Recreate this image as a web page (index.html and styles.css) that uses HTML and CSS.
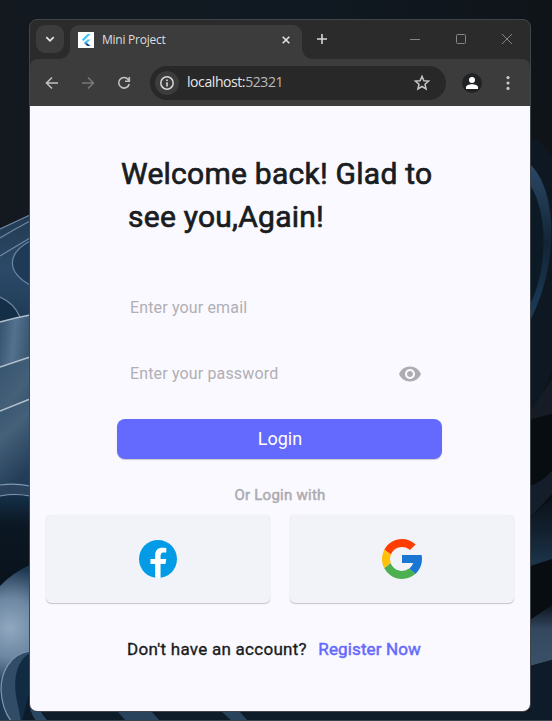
FILE: index.html
```html
<!DOCTYPE html>
<html lang="en">
<head>
<meta charset="utf-8">
<title>Mini Project</title>
<link rel="stylesheet" href="styles.css">
</head>
<body>
<svg class="wallpaper" viewBox="0 0 552 721" aria-hidden="true">
  <defs>
    <linearGradient id="night" x2="1" y2="0"><stop stop-color="#141920"/><stop offset=".5" stop-color="#101922"/><stop offset="1" stop-color="#0f1419"/></linearGradient>
    <linearGradient id="petalA" x2="0" y2="1"><stop stop-color="#233a52"/><stop offset=".5" stop-color="#2c4a68"/><stop offset="1" stop-color="#1d3954"/></linearGradient>
    <linearGradient id="petalB" x2="1" y2=".6"><stop stop-color="#33516e"/><stop offset=".4" stop-color="#54718d"/><stop offset="1" stop-color="#2c4862"/></linearGradient>
    <linearGradient id="petalC" x2=".3" y2="1"><stop stop-color="#35536e"/><stop offset=".4" stop-color="#456079"/><stop offset="1" stop-color="#233d58"/></linearGradient>
    <linearGradient id="hollow" x2="0" y2="1"><stop stop-color="#15314a"/><stop offset=".3" stop-color="#0b1722"/><stop offset="1" stop-color="#09121b"/></linearGradient>
    <radialGradient id="glow" gradientUnits="userSpaceOnUse" cx="10" cy="628" r="60"><stop stop-color="#91a8c0"/><stop offset=".5" stop-color="#6c86a1"/><stop offset="1" stop-color="#1e3852"/></radialGradient>
    <linearGradient id="blade" x2="0" y2="1"><stop stop-color="#2b4866"/><stop offset=".5" stop-color="#122536"/><stop offset="1" stop-color="#1c3c5a"/></linearGradient>
    <linearGradient id="band" x2="0" y2="1"><stop stop-color="#0b1119"/><stop offset=".5" stop-color="#12212f"/><stop offset="1" stop-color="#1c354c"/></linearGradient>
    <linearGradient id="lit" x2="0" y2="1"><stop stop-color="#0b151f"/><stop offset=".4" stop-color="#33485f"/><stop offset="1" stop-color="#3a5169"/></linearGradient>
  </defs>
  <rect width="552" height="721" fill="url(#night)"/>
  <path d="M0 229Q15 222 30 215V325H0Z" fill="url(#petalA)"/>
  <path d="M30 240C7 253 6 272 30 285Z" fill="#1e3a56"/>
  <path d="M0 297Q14 303 20 317L0 322Z" fill="#142e47"/>
  <path d="M0 321Q14 318 30 315V490H0Z" fill="url(#petalB)"/>
  <path d="M0 367Q15 362 30 357V490H0Z" fill="url(#petalC)"/>
  <path d="M0 411Q15 405 30 399V490H0Z" fill="url(#petalC)"/>
  <path d="M0 485Q15 483 30 486V496H0Z" fill="#2b435d"/>
  <path d="M0 496Q15 493 30 496V596H0Z" fill="url(#hollow)"/>
  <path d="M0 586Q12 573 30 565V721H0Z" fill="url(#glow)"/>
  <path d="M30 651C10 654 1 672 1 690Q2 709 11 721H34V651Z" fill="#314c67"/>
  <path d="M30 653C18 660 13 676 16 696L21 721H44V653Z" fill="#102b42"/>
  <path d="M30 690V712H530V721H22Z" fill="#0e1b28"/>
  <path d="M30 700Q29 712 36 721H48Q40 713 39 706Z" fill="#294761"/>
  <path d="M118 712H152L160 721H126ZM222 712H240L248 721H232Z" fill="#29435c"/>
  <g fill="none" stroke="#8298b0" stroke-width="1.2">
    <path d="M0 229Q15 222 30 215M0 238Q15 229 30 221M0 256Q15 247 30 238M30 241C6 254 7 272 30 285M0 297Q14 303 20 317" stroke="#6d88a4"/>
    <path d="M0 322Q14 318 30 315M0 367Q15 362 30 357M0 411Q15 405 30 399" stroke="#b0bfce" stroke-width="1.6"/>
    <path d="M0 485Q15 483 30 486M0 496Q15 493 30 496M30 651C10 654 1 672 1 690Q2 709 11 721"/>
  </g>
  <path d="M530 136Q544 144 552 157V370Q542 398 530 418Z" fill="#0d1822"/>
  <path d="M530 164C557 190 560 262 530 321Z" fill="url(#blade)"/>
  <path d="M530 185C548 212 548 270 530 304Z" fill="#0c1a26"/>
  <path d="M530 412L552 379V414L530 419Z" fill="#151c26"/>
  <path d="M530 420L552 414V721H530Z" fill="#080d12"/>
  <path d="M530 486Q542 482 552 471V494L530 518Z" fill="#131e2a"/>
  <path d="M530 518L552 497V559L530 566Z" fill="url(#band)"/>
  <path d="M530 620L552 605V660L530 666Z" fill="url(#lit)"/>
  <path d="M530 666L552 660V721H530Z" fill="#0e1c29"/>
  <path d="M0 720.5H552" stroke="#3b434a"/>
</svg>

<main class="window">
  <header class="tabstrip">
    <button class="tab-search" aria-label="Search tabs"><svg width="10" height="10" viewBox="0 0 10 10"><path d="M1.3 3.2 5 6.8l3.7-3.6" fill="none" stroke="#e3e3e3" stroke-width="1.8"/></svg></button>
    <div class="tab">
      <span class="favicon"><svg width="16" height="16" viewBox="0 0 16 16"><path d="M9.5 2h3.1L5.4 9.2 3.9 7.6Z" fill="#45c5f9"/><path d="M9.5 7.4h3.1L9 11l-1.6-1.6Z" fill="#45c5f9"/><path d="M7.4 9.3 9 10.9 7.4 12.4 5.9 10.9Z" fill="#29a4e8"/><path d="m7.4 12.4 1.6-1.5 3.6 3.2H9.4Z" fill="#124d8c"/></svg></span>
      <span class="tab-title">Mini Project</span>
      <svg class="tab-close" width="8" height="8" viewBox="0 0 8 8"><path d="m.7.7 6.6 6.6m0-6.6L.7 7.3" stroke="#e3e3e3" stroke-width="1.6"/></svg>
    </div>
    <svg class="new-tab" width="12" height="12" viewBox="0 0 12 12"><path d="M6 1v10M1 6h10" stroke="#d8d8d8" stroke-width="1.6"/></svg>
    <div class="window-controls">
      <svg width="12" height="12" viewBox="0 0 12 12"><path d="M1 6.5h10"/></svg>
      <svg width="12" height="12" viewBox="0 0 12 12"><rect x="1.5" y="1.5" width="9" height="9" rx="1"/></svg>
      <svg width="12" height="12" viewBox="0 0 12 12"><path d="m1 1 10 10M11 1 1 11"/></svg>
    </div>
  </header>

  <nav class="toolbar">
    <svg class="nav-icon" width="16" height="16" viewBox="0 0 16 16"><path d="M14 8H3M8 2.500 2.500 8 8 13.500" stroke="#c0c0c0"/></svg>
    <svg class="nav-icon" width="16" height="16" viewBox="0 0 16 16"><path d="M2 8h11M8 2.500 13.500 8 8 13.500" stroke="#777"/></svg>
    <svg class="nav-icon" width="16" height="16" viewBox="0 0 16 16"><path d="M13.200 9A5.300 5.300 0 1 1 12.200 4.500L13.300 6M13.300 2v4.200H9" stroke="#c0c0c0"/></svg>
    <div class="omnibox">
      <span class="site-info"><svg width="16" height="16" viewBox="0 0 16 16"><circle cx="8" cy="8" r="6.200" fill="none" stroke="#d8d8d8" stroke-width="1.500"/><path d="M8 7.200V11.400M8 4.500V6.100" stroke="#d8d8d8" stroke-width="1.600"/></svg></span>
      <span class="address">localhost:<span class="port">52321</span></span>
      <svg class="star" width="18" height="18" viewBox="0 0 18 18"><path d="m9 2.300 1.900 4.400 4.700.4-3.600 3.200 1.100 4.700L9 12.500 4.900 15 6 10.300 2.400 7.100l4.700-.4Z" fill="none" stroke="#c5c5c5" stroke-width="1.500"/></svg>
    </div>
    <span class="profile"><svg width="14" height="14" viewBox="0 0 14 14" fill="#fff"><circle cx="7" cy="4" r="3"/><path d="M1 13v-1.800C1 9.300 4 8.200 7 8.200s6 1.100 6 3V13Z"/></svg></span>
    <svg class="menu" width="4" height="16" viewBox="0 0 4 16" fill="#c8c8c8"><circle cx="2" cy="2.600" r="1.600"/><circle cx="2" cy="8" r="1.600"/><circle cx="2" cy="13.400" r="1.600"/></svg>
  </nav>

  <section class="page">
    <h1 class="welcome"><span class="line-one">Welcome back! Glad to</span><span class="line-two">see you,Again!</span></h1>
    <form class="login">
      <div class="field"><span class="hint">Enter your email</span></div>
      <div class="field"><span class="hint">Enter your password</span>
        <svg class="eye" width="24" height="24" viewBox="0 0 24 24"><path fill="#adacb1" d="M12 4.500C7 4.500 2.730 7.610 1 12c1.730 4.390 6 7.500 11 7.500s9.270-3.110 11-7.500c-1.730-4.390-6-7.500-11-7.500zM12 17c-2.760 0-5-2.240-5-5s2.240-5 5-5 5 2.240 5 5-2.240 5-5 5zm0-8c-1.660 0-3 1.340-3 3s1.340 3 3 3 3-1.340 3-3-1.340-3-3-3z"/></svg>
      </div>
      <button class="submit" type="button">Login</button>
    </form>
    <p class="divider">Or Login with</p>
    <div class="providers">
      <button class="provider" aria-label="Facebook"><svg width="48" height="48" viewBox="0 0 48 48"><circle cx="24" cy="24" r="19" fill="#039be5"/><path fill="#fff" d="M26.572 29.036h4.917l.772-4.995h-5.690v-2.730c0-2.075.678-3.915 2.619-3.915h3.119v-4.359c-.548-.074-1.707-.236-3.897-.236-4.573 0-7.254 2.415-7.254 7.917v3.323h-4.701v4.995h4.701v13.729c.931.140 1.874.235 2.842.235.875 0 1.729-.080 2.572-.194Z"/></svg></button>
      <button class="provider" aria-label="Google"><svg width="48" height="48" viewBox="0 0 48 48"><path fill="#1976d2" d="M43.611 20.083H24v8h11.303a12.040 12.040 0 0 1-4.087 5.571l6.190 5.238C36.971 39.205 44 34 44 24c0-1.341-.138-2.650-.389-3.917z"/><path fill="#ff3d00" d="m6.306 14.691 6.571 4.819C14.655 15.108 18.961 12 24 12c3.059 0 5.842 1.154 7.961 3.039l5.657-5.657C34.046 6.053 29.268 4 24 4 16.318 4 9.656 8.337 6.306 14.691z"/><path fill="#4caf50" d="M24 44c5.166 0 9.860-1.977 13.409-5.192l-6.190-5.238A11.910 11.910 0 0 1 24 36c-5.202 0-9.619-3.317-11.283-7.946l-6.522 5.025C9.505 39.556 16.227 44 24 44z"/><path fill="#ffc107" d="M6.306 14.691C4.800 17.450 4 20.650 4 24c0 3.270.790 6.350 2.195 9.079l6.522-5.025A12 12 0 0 1 12.877 19.510Z"/></svg></button>
    </div>
    <p class="signup"><span class="question">Don't have an account?</span><a class="register">Register Now</a></p>
  </section>
</main>
</body>
</html>
```
FILE: styles.css
```css
* { box-sizing: border-box; }
body {
  margin: 0;
  width: 552px;
  height: 721px;
  overflow: hidden;
  padding: 19px 21px 9px 29px;
  font-family: Roboto, sans-serif;
}
button { border: 0; padding: 0; font: inherit; }
svg { display: block; flex: none; }
.wallpaper { position: absolute; inset: 0; width: 552px; height: 721px; z-index: -1; }
.window {
  width: 502px;
  height: 693px;
  border: 1px solid #41464a;
  border-radius: 8px;
  overflow: hidden;
  background: #2b2b2b;
}
.tabstrip { display: flex; height: 39px; padding: 5px 17px 0 6px; }
.tab-search {
  width: 28px;
  height: 28px;
  display: grid;
  place-items: center;
  border-radius: 9px;
  background: #3c3c3c;
}
.tab {
  position: relative;
  display: flex;
  align-items: center;
  width: 232px;
  height: 34px;
  margin-left: 6px;
  padding: 0 12px 5px 8px;
  border-radius: 9px 9px 0 0;
  background: #3c3c3c;
}
.tab::before, .tab::after {
  content: "";
  position: absolute;
  bottom: 0;
  width: 10px;
  height: 10px;
}
.tab::before { left: -10px; background: radial-gradient(circle at 0 0, transparent 9.5px, #3c3c3c 10px); }
.tab::after { right: -10px; background: radial-gradient(circle at 100% 0, transparent 9.5px, #3c3c3c 10px); }
.favicon { width: 16px; height: 16px; background: #fff; }
.tab-title {
  margin-left: 8px;
  color: #dedede;
  font: 12px/16px "Open Sans", sans-serif;
  letter-spacing: -0.25px;
}
.tab-close { margin-left: auto; }
.new-tab { margin: 8px 0 0 14px; }
.window-controls { display: flex; gap: 34px; margin: 8px 0 0 auto; }
.window-controls svg { fill: none; stroke: #858585; stroke-width: 1; }
.toolbar {
  display: flex;
  align-items: center;
  height: 47px;
  padding: 0 20px 0 14px;
  border-radius: 8px 8px 0 0;
  background: #3c3c3c;
}
.nav-icon { margin-right: 20px; fill: none; stroke-width: 1.6; }
.omnibox {
  display: flex;
  align-items: center;
  width: 296px;
  height: 34px;
  margin-left: -2px;
  padding: 0 15px 0 5px;
  border-radius: 17px;
  background: #282828;
}
.site-info {
  display: grid;
  place-items: center;
  width: 24px;
  height: 24px;
  border-radius: 50%;
  background: #3c3c3c;
}
.address { margin: -2px 0 0 8px; color: #e6e6e6; font: 14px/20px "Open Sans", sans-serif; letter-spacing: -0.42px; }
.port { color: #bdbbb6; }
.star { margin-left: auto; }
.profile {
  display: grid;
  place-items: center;
  width: 20px;
  height: 20px;
  margin-left: 16px;
  border-radius: 50%;
  background: #202224;
}
.menu { margin-left: auto; }
.page {
  display: flex;
  flex-direction: column;
  height: 605px;
  padding: 46px 15px 0;
  background: #faf9ff;
}
.welcome {
  margin: 0 0 0 76px;
  color: #191c20;
  font-size: 30px;
  line-height: 43px;
  font-weight: 400;
  letter-spacing: 0.25px;
  -webkit-text-stroke: 0.7px;
  white-space: nowrap;
}
.welcome span { display: block; }
.line-two { margin-left: 7px; }
.login { width: 325px; margin: 36px 0 0 72.4px; }
.field {
  display: flex;
  align-items: center;
  justify-content: space-between;
  height: 66px;
  padding: 0 20.4px 0 12.6px;
  color: #b0afb4;
  font-size: 16px;
  letter-spacing: 0.15px;
}
.eye { margin-top: 2px; }
.submit {
  display: block;
  width: 325px;
  height: 40px;
  margin-top: 13px;
  padding-bottom: 2px;
  border-radius: 8px;
  background: #636afd;
  box-shadow: 0 1px 1px #0003;
  color: #fff;
  font-size: 18px;
}
.divider {
  margin: 26px 0 0;
  color: #acabb0;
  font-size: 15px;
  line-height: 20px;
  letter-spacing: 0.25px;
  -webkit-text-stroke: 0.5px;
  text-align: center;
}
.providers { display: flex; gap: 20px; margin: 10px 0 0 1px; }
.provider {
  display: grid;
  place-items: center;
  width: 224px;
  height: 88px;
  border-radius: 5px;
  background: #f2f3f9;
  box-shadow: 0 1px 1px #0003, 0 0 1px #0002;
}
.signup {
  display: flex;
  margin: 36px 0 0 82px;
  color: #191c20;
  font-size: 17px;
  line-height: 20px;
  letter-spacing: 0.27px;
  -webkit-text-stroke: 0.35px;
  white-space: nowrap;
}
.register { margin-left: 11.5px; color: #636afd; letter-spacing: 0.12px; -webkit-text-stroke: 0.5px; }
```
